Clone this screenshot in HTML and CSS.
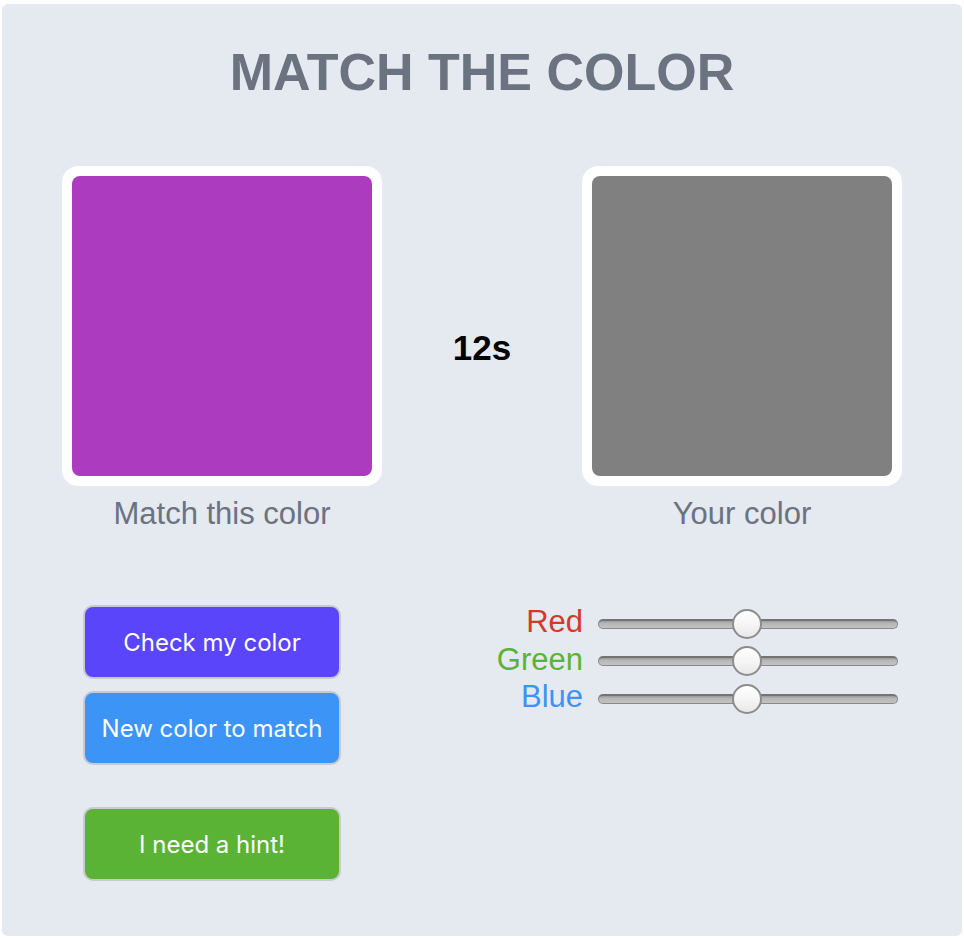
FILE: index.html
```html
<!DOCTYPE html>
<html lang="en">
<head>
<meta charset="utf-8">
<title>Match the color</title>
<link rel="stylesheet" href="styles.css">
</head>
<body>
<main class="game">
  <h1 class="title">MATCH THE COLOR</h1>
  <section class="swatches">
    <div class="swatch-col">
      <div class="frame"><div class="swatch swatch-target"></div></div>
      <p class="caption">Match this color</p>
    </div>
    <div class="timer">12s</div>
    <div class="swatch-col">
      <div class="frame"><div class="swatch swatch-user"></div></div>
      <p class="caption">Your color</p>
    </div>
  </section>
  <section class="controls">
    <div class="buttons">
      <button class="btn btn-check">Check my color</button>
      <button class="btn btn-new">New color to match</button>
      <button class="btn btn-hint">I need a hint!</button>
    </div>
    <div class="sliders">
      <label class="slider-label label-red" for="r">Red</label>
      <input class="range" id="r" type="range" min="0" max="255" value="127">
      <label class="slider-label label-green" for="g">Green</label>
      <input class="range" id="g" type="range" min="0" max="255" value="127">
      <label class="slider-label label-blue" for="b">Blue</label>
      <input class="range" id="b" type="range" min="0" max="255" value="127">
    </div>
  </section>
</main>
</body>
</html>
```

FILE: styles.css
```css
html, body {
  margin: 0;
  padding: 0;
  background: #ffffff;
}

body {
  padding: 4px 2px 2px 2px;
  font-family: "Liberation Sans", Arial, sans-serif;
}

.game {
  background: #e5e9f0;
  border-radius: 6px;
  height: 932px;
  box-sizing: border-box;
  padding-top: 38px;
}

.title {
  margin: 0;
  text-align: center;
  font-size: 52px;
  font-weight: bold;
  color: #6b7280;
  line-height: normal;
}

.swatches {
  display: flex;
  justify-content: space-between;
  align-items: flex-start;
  padding: 0 60px;
  margin-top: 64px;
}

.swatch-col {
  display: flex;
  flex-direction: column;
  align-items: center;
  width: 320px;
}

.frame {
  width: 320px;
  height: 320px;
  box-sizing: border-box;
  padding: 10px;
  background: #ffffff;
  border-radius: 16px;
}

.swatch {
  width: 100%;
  height: 100%;
  border-radius: 8px;
}

.swatch-target { background: #ac3bc0; }
.swatch-user { background: #808080; }

.caption {
  margin: 10px 0 0 0;
  font-size: 31px;
  color: #6b7280;
  line-height: normal;
}

.timer {
  font-size: 35px;
  font-weight: bold;
  color: #000000;
  margin-top: 164px;
  line-height: 1;
}

.controls {
  display: flex;
  justify-content: space-between;
  align-items: flex-start;
  padding: 0 64px 0 81px;
  margin-top: 73px;
}

.buttons {
  display: flex;
  flex-direction: column;
  width: 258px;
}

.btn {
  height: 74px;
  width: 258px;
  box-sizing: border-box;
  border: 2px solid #c8cacf;
  border-radius: 10px;
  color: #ffffff;
  font-family: Inter, "Liberation Sans", sans-serif;
  font-size: 24px;
  padding: 0;
  cursor: pointer;
}

.btn + .btn { margin-top: 12px; }
.btn-hint { margin-top: 42px !important; }

.btn-check { background: #5a45fa; }
.btn-new { background: #3b94f6; }
.btn-hint { background: #5bb336; }

.sliders {
  display: grid;
  grid-template-columns: auto 300px;
  grid-auto-rows: 37.5px;
  column-gap: 15px;
  align-items: center;
  margin-top: 0;
}

.slider-label {
  justify-self: end;
  font-size: 31px;
  line-height: 1;
  position: relative;
  top: -2px;
}

.label-red { color: #d4382c; }
.label-green { color: #5bb336; }
.label-blue { color: #3b94f6; }

.range {
  -webkit-appearance: none;
  appearance: none;
  width: 300px;
  height: 30px;
  margin: 0;
  background: transparent;
}

.range::-webkit-slider-runnable-track {
  height: 10px;
  border-radius: 5px;
  box-sizing: border-box;
  border: 1px solid #888888;
  border-top: 2px solid #747474;
  background: linear-gradient(#9a9a9a 0%, #b7b7b7 35%, #c3c3c3 100%);
}

.range::-webkit-slider-thumb {
  -webkit-appearance: none;
  appearance: none;
  width: 30px;
  height: 30px;
  border-radius: 50%;
  box-sizing: border-box;
  border: 2px solid #8c8c8c;
  background: linear-gradient(#ffffff 0%, #f6f6f6 50%, #e8e8e8 100%);
  margin-top: -12px;
}
```
